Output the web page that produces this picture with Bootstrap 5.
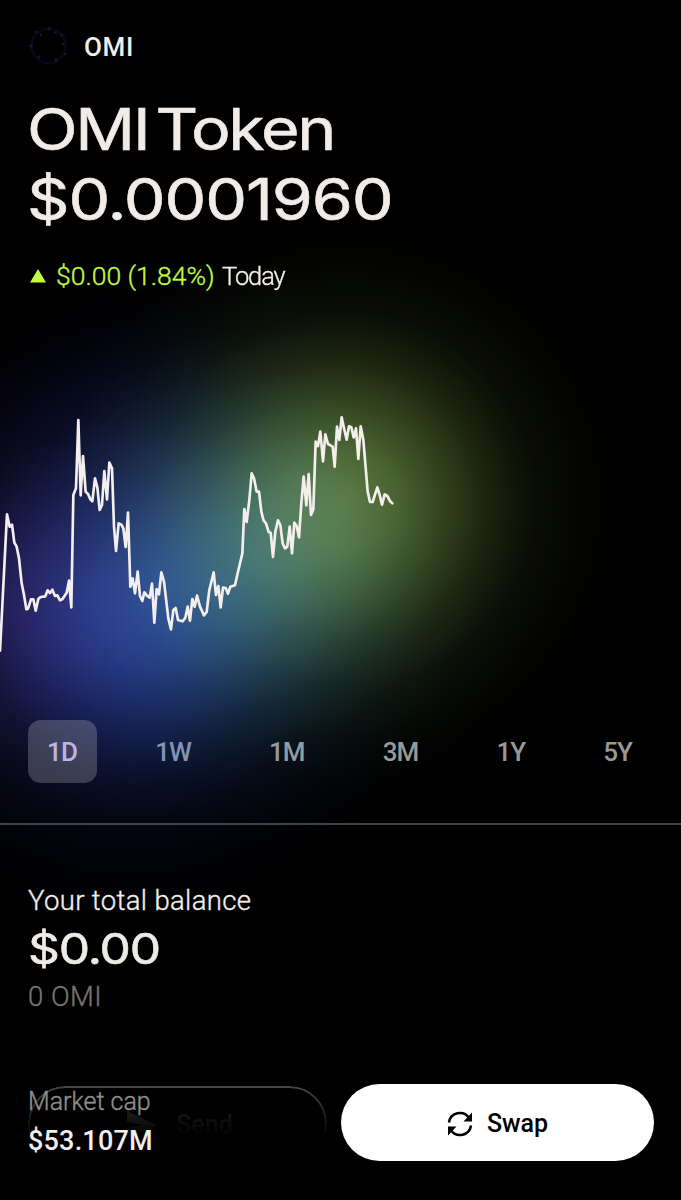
<!DOCTYPE html>
<html lang="en">
<head>
<meta charset="utf-8">
<meta name="viewport" content="width=device-width, initial-scale=1">
<title>OMI Token</title>
<link href="https://cdn.jsdelivr.net/npm/bootstrap@5.3.0/dist/css/bootstrap.min.css" rel="stylesheet">
<style>
  body { background: #000; color: #f2eeea; font-family: Roboto, "Liberation Sans", sans-serif; }
  .token-page {
    height: 1200px; overflow: hidden; padding-top: 27px;
    background-color: #000;
    background-blend-mode: screen;
    background-image:
      radial-gradient(circle 285px at 346px 500px, rgb(80,100,38) 0%, rgb(70,88,34) 16.7%, rgb(48,61,23) 33.3%, rgb(26,32,12) 50%, rgb(10,13,5) 66.7%, rgb(3,4,1) 83.3%, #000 100%),
      radial-gradient(circle 280px at 255px 560px, rgb(26,72,66) 0%, rgb(23,63,58) 16.7%, rgb(16,44,40) 33.3%, rgb(8,23,21) 50%, rgb(4,10,9) 66.7%, rgb(1,3,3) 83.3%, #000 100%),
      radial-gradient(circle 240px at 130px 460px, rgb(4,5,24) 0%, rgb(4,4,21) 16.7%, rgb(2,3,15) 33.3%, rgb(1,2,8) 50%, rgb(1,1,3) 66.7%, #000 100%),
      radial-gradient(circle 300px at 130px 622px, rgb(26,46,128) 0%, rgb(23,41,113) 16.7%, rgb(16,28,78) 33.3%, rgb(9,15,42) 50%, rgb(4,6,17) 66.7%, rgb(1,2,6) 83.3%, #000 100%),
      radial-gradient(circle 240px at 20px 600px, rgb(24,8,34) 0%, rgb(21,7,30) 16.7%, rgb(15,5,21) 33.3%, rgb(8,3,11) 50%, rgb(4,1,5) 66.7%, #000 100%);
  }
  .gutter { padding-left: 28px; padding-right: 28px; }
  .token-bar { height: 38px; gap: 15px; }
  .token-symbol { font-size: 26px; line-height: 38px; font-weight: 500; letter-spacing: .7px; position: relative; top: 1px; }
  .wide { font-family: Inter, "Liberation Sans", sans-serif; font-weight: 400; -webkit-text-stroke: .6px currentColor; display: block; width: max-content; transform-origin: 0 50%; white-space: pre; }
  .headline { margin: 29px 0 0 -1px; font-size: 58px; line-height: 70px; color: #f1ece8; }
  .name-fit { letter-spacing: -2px; word-spacing: -8px; transform: scaleX(1.142); }
  .price-fit { letter-spacing: -1px; transform: scaleX(1.144); }
  .change-row { margin-top: 23px; height: 38px; line-height: 38px; font-size: 26.5px; }
  .thin { font-weight: 300; -webkit-text-stroke: .35px currentColor; }
  .gain { color: #c1fc45; margin-left: 9px; margin-right: 7px; }
  .today { letter-spacing: -1.1px; display: inline-block; transform: scaleX(.96); transform-origin: 0 50%; }
  .plot { display: block; width: 681px; height: 260px; margin-top: 105px; }
  .periods { margin-top: 60px; height: 63px; padding-right: 29px; }
  .period { border: 0; background: none; border-radius: 13px; padding: 2px 20px 0 19px; font-size: 26px; letter-spacing: -1px; font-weight: 500; color: #999; }
  .p-day { width: 69px; background: rgba(255,255,255,.2); color: #bdb4e4; }
  .p-week { color: #8294b4; }
  .p-month { color: #929ca2; }
  .rule { margin-top: 40px; height: 2px; background: rgba(255,255,255,.25); }
  .balance { margin-top: 57px; }
  .label { font-size: 27.5px; line-height: 38px; }
  .lbl-balance { letter-spacing: .35px; }
  .amount { font-size: 43px; line-height: 56px; }
  .amount-fit { letter-spacing: -1px; transform: scaleX(1.155); color: #eeeae6; }
  .dim { color: #777471; letter-spacing: .5px; padding-top: 2px; }
  .market { margin-top: 67px; position: relative; z-index: 2; }
  .cap-label { font-size: 25px; line-height: 38px; color: #92908e; }
  .cap-value { font-size: 27px; line-height: 38px; font-weight: 500; letter-spacing: .2px; padding-top: 1px; }
  .actions { position: absolute; left: 28px; top: 1084px; width: 626px; height: 77px; gap: 14px; }
  .pill { border-radius: 44px; gap: 14px; font-size: 25px; font-weight: 500; padding-top: 3px; }
  .pill-send { width: 299px; border: 2px solid #484646; color: #2c2b2b; margin-top: 2px; gap: 18px; padding-left: 4px;
    -webkit-mask-image: linear-gradient(#000 0%, rgba(0,0,0,.45) 40%, transparent 68%); mask-image: linear-gradient(#000 0%, rgba(0,0,0,.45) 40%, transparent 68%); }
  .pill-swap { flex: 1 1 0; background: #fff; color: #000; }
</style>
</head>
<body>
<main class="token-page position-relative">
  <header class="token-bar gutter d-flex align-items-center">
    <svg width="41" height="41" viewBox="0 0 41 41" aria-hidden="true">
      <circle cx="20.500" cy="20" r="17" fill="none" stroke="#050917" stroke-width="2.500"/>
      <g fill="#101b3c"><circle cx="21" cy="2.500" r="1.600"/><circle cx="27.500" cy="6.500" r="1.300"/><circle cx="34" cy="9" r="1.300"/><circle cx="35" cy="18" r="1.200"/><circle cx="37" cy="28" r="1.200"/><circle cx="28" cy="34" r="1.700"/><circle cx="11" cy="31" r="1.400"/><circle cx="3" cy="20" r="1.800"/><circle cx="8" cy="6" r="1.300"/><circle cx="13" cy="9" r="1.200"/></g>
    </svg>
    <span class="token-symbol">OMI</span>
  </header>

  <h1 class="headline gutter">
    <span class="wide name-fit">OMI Token</span>
    <span class="wide price-fit">$0.0001960</span>
  </h1>

  <div class="change-row thin gutter d-flex align-items-center">
    <svg width="19" height="16" viewBox="0 0 19 16" aria-hidden="true"><path d="M10 1L18 14.500H2Z" fill="#c1fc45"/></svg>
    <span class="gain">$0.00 (1.84%)</span><span class="today">Today</span>
  </div>

  <svg class="plot" viewBox="0 0 2043 780" aria-label="Price chart">
    <polyline fill="none" stroke="#f4efed" stroke-width="8" stroke-linejoin="round" stroke-linecap="round" points="0,752 21,343 29,380 36,374 43,428 50,440 57,475 65,550 72,585 79,628 84,626 93,598 100,598 107,632 115,597 122,591 136,589 143,571 150,579 157,569 165,588 172,586 180,601 187,598 200,578 207,542 214,622 220,285 228,265 235,60 242,286 249,168 257,275 264,282 271,298 277,304 285,235 292,262 299,330 306,315 313,213 321,298 328,188 336,205 342,380 348,453 356,370 364,374 370,385 377,441 384,338 391,560 398,535 405,580 413,515 420,588 427,603 433,577 441,587 449,593 456,551 463,668 470,567 477,583 484,517 492,545 505,655 513,688 520,630 527,624 534,660 548,664 556,653 563,620 570,662 577,597 584,620 591,587 600,620 612,646 620,636 628,570 641,517 648,585 655,558 662,622 669,563 677,564 684,581 691,560 705,556 713,520 727,460 733,327 740,366 748,300 755,220 762,235 770,275 777,275 784,335 791,362 798,370 806,396 812,398 819,471 826,395 834,361 841,375 848,430 855,445 862,440 869,380 876,460 883,368 890,378 897,412 904,310 911,230 919,316 926,222 933,345 940,328 947,125 954,138 961,95 969,184 976,103 984,132 998,140 1004,200 1011,80 1018,120 1025,52 1032,85 1040,119 1047,79 1054,82 1061,112 1068,85 1075,177 1082,79 1090,120 1103,275 1110,306 1118,306 1132,262 1139,285 1146,314 1154,283 1162,288 1170,303 1177,310"/>
  </svg>

  <nav class="periods gutter d-flex justify-content-between">
    <button class="period p-day">1D</button>
    <button class="period p-week">1W</button>
    <button class="period p-month">1M</button>
    <button class="period">3M</button>
    <button class="period">1Y</button>
    <button class="period">5Y</button>
  </nav>

  <div class="rule"></div>

  <section class="balance gutter">
    <div class="label thin"><span class="lbl-balance">Your total balance</span></div>
    <div class="amount"><span class="wide amount-fit">$0.00</span></div>
    <div class="label thin dim">0 OMI</div>
  </section>

  <section class="market gutter">
    <div class="cap-label thin">Market cap</div>
    <div class="cap-value">$53.107M</div>
  </section>

  <div class="actions d-flex">
    <div class="pill pill-send d-flex align-items-center justify-content-center">
      <svg width="32" height="28" viewBox="0 0 32 28" aria-hidden="true"><path d="M1 0L31 14L1 28V17L17 14L1 11Z" fill="#343232"/></svg>
      <span>Send</span>
    </div>
    <div class="pill pill-swap d-flex align-items-center justify-content-center">
      <svg width="26" height="26" viewBox="0 0 26 26" aria-hidden="true">
        <g fill="none" stroke="#000" stroke-width="2.500"><path d="M2 11.500A11 11 0 0 1 22 6.800"/><path d="M24 14.500A11 11 0 0 1 4 19.200"/></g>
        <path d="M25 1.500V10.500H16.500Z M1 24.500V15.500H9.500Z"/>
      </svg>
      <span>Swap</span>
    </div>
  </div>
</main>
<script src="https://cdn.jsdelivr.net/npm/bootstrap@5.3.0/dist/js/bootstrap.bundle.min.js"></script>
</body>
</html>
